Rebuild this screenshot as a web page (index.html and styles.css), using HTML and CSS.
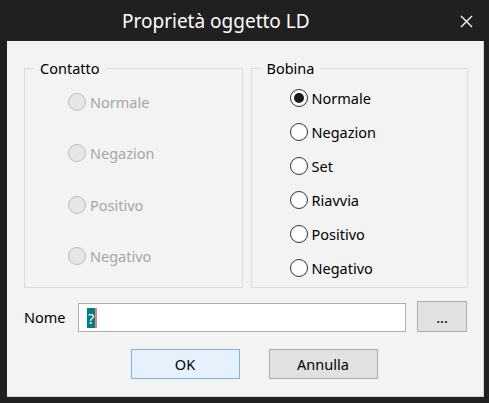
FILE: index.html
```html
<!DOCTYPE html>
<html lang="it">
<head>
<meta charset="utf-8">
<title>Proprietà oggetto LD</title>
<link rel="stylesheet" href="styles.css">
</head>
<body>
<div class="window">
  <div class="titlebar">
    <span class="title">Proprietà oggetto LD</span>
    <span class="close">
      <svg width="13" height="13" viewBox="0 0 13 13"><path d="M1 1 L12 12 M12 1 L1 12" stroke="#ffffff" stroke-width="1.4" fill="none"/></svg>
    </span>
  </div>
  <div class="client">
    <div class="groups">
      <fieldset class="group group-left">
        <legend>Contatto</legend>
        <div class="radios radios-left">
          <label class="radio disabled"><span class="dot"></span><span>Normale</span></label>
          <label class="radio disabled"><span class="dot"></span><span>Negazion</span></label>
          <label class="radio disabled"><span class="dot"></span><span>Positivo</span></label>
          <label class="radio disabled"><span class="dot"></span><span>Negativo</span></label>
        </div>
      </fieldset>
      <fieldset class="group group-right">
        <legend>Bobina</legend>
        <div class="radios radios-right">
          <label class="radio checked"><span class="dot"></span><span>Normale</span></label>
          <label class="radio"><span class="dot"></span><span>Negazion</span></label>
          <label class="radio"><span class="dot"></span><span>Set</span></label>
          <label class="radio"><span class="dot"></span><span>Riavvia</span></label>
          <label class="radio"><span class="dot"></span><span>Positivo</span></label>
          <label class="radio"><span class="dot"></span><span>Negativo</span></label>
        </div>
      </fieldset>
    </div>
    <div class="name-row">
      <span class="name-label">Nome</span>
      <div class="input"><span class="sel">?</span></div>
      <div class="btn btn-dots">...</div>
    </div>
    <div class="buttons">
      <div class="btn btn-main btn-ok">OK</div>
      <div class="btn btn-main">Annulla</div>
    </div>
  </div>
</div>
</body>
</html>
```

FILE: styles.css
```css
* { box-sizing: border-box; }
html, body { margin: 0; padding: 0; }
body {
  background: #202020;
  font-family: "Noto Sans", "Open Sans", sans-serif;
  font-size: 14.5px;
  color: #000;
}
.window {
  width: 489px;
  height: 403px;
  display: flex;
  flex-direction: column;
}
.titlebar {
  height: 41px;
  display: flex;
  align-items: center;
  padding-left: 122px;
  color: #ffffff;
}
.title {
  font-size: 19px;
  flex: 1;
  padding-top: 1px;
}
.close {
  display: flex;
  padding-right: 16px;
  padding-top: 2px;
}
.client {
  margin-left: 7px;
  width: 477px;
  height: 356px;
  background: #f3f3f3;
  border-right: 1px solid #d0d0d0;
  border-bottom: 1px solid #d0d0d0;
  padding: 17px 15px 0 17px;
  display: flex;
  flex-direction: column;
}
.groups {
  display: flex;
  gap: 8px;
}
.group {
  margin: 0;
  border: 1px solid #dcdcdc;
  height: 230px;
  padding: 0;
}
.group-left { width: 219px; }
.group-right { width: 218px; }
legend {
  margin-left: 9px;
  padding: 0 6px;
  line-height: 20px;
  font-size: 14.5px;
}
.radios {
  display: flex;
  flex-direction: column;
}
.radios-left { padding-left: 43px; margin-top: -2px; }
.radios-right { padding-left: 38px; padding-top: 3px; }
.radio {
  display: flex;
  align-items: center;
  gap: 4px;
}
.radios-left .radio { height: 51.5px; }
.radios-right .radio { height: 34px; }
.dot {
  width: 18px;
  height: 18px;
  border-radius: 50%;
  border: 1px solid #333333;
  background: #ffffff;
  display: flex;
  align-items: center;
  justify-content: center;
}
.checked .dot::after {
  content: "";
  width: 10px;
  height: 10px;
  border-radius: 50%;
  background: #1a1a1a;
}
.disabled { color: #a6a6a6; }
.disabled .dot {
  border-color: #bcbcbc;
  background: #e6e6e6;
}
.name-row {
  display: flex;
  align-items: center;
  margin-top: 13px;
  height: 31px;
}
.name-label {
  width: 54px;
}
.input {
  width: 328px;
  height: 29px;
  margin-top: 2px;
  background: #ffffff;
  border: 1px solid #adadad;
  display: flex;
  align-items: center;
  padding-left: 8px;
}
.sel {
  background: #008080;
  color: #ffffff;
  line-height: 20px;
  padding: 0 1px;
  border-right: 2px solid #f08080;
}
.btn {
  display: flex;
  align-items: center;
  justify-content: center;
  background: #e1e1e1;
  border: 1px solid #adadad;
}
.btn-dots {
  width: 50px;
  height: 31px;
  margin-left: 11px;
}
.buttons {
  display: flex;
  justify-content: center;
  gap: 29px;
  margin-top: 17px;
  padding-left: 16px;
}
.btn-main {
  width: 109px;
  height: 30px;
}
.btn-ok {
  background: #e5f1fb;
  border-color: #7eb4ea;
}
```
